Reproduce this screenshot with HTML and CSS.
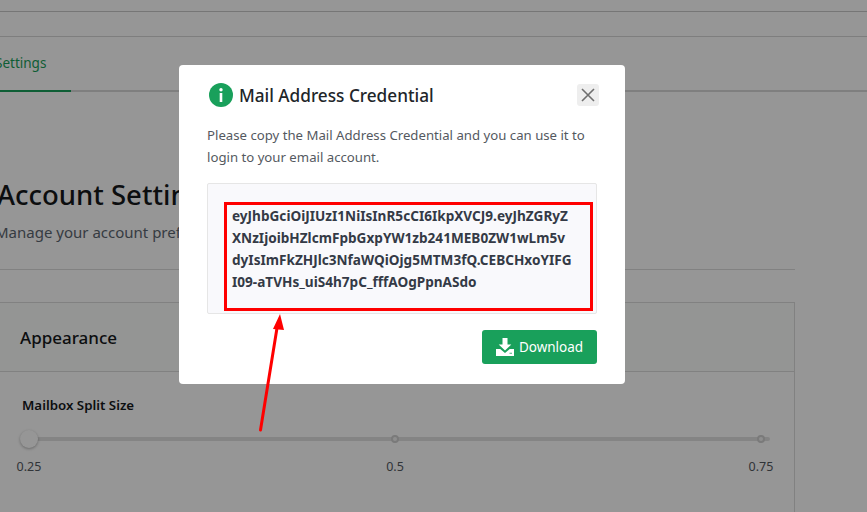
FILE: index.html
```html
<!DOCTYPE html>
<html lang="en">
<head>
<meta charset="utf-8">
<title>Mail Address Credential</title>
<link rel="stylesheet" href="styles.css">
</head>
<body>
<div class="page">
  <div class="topbar"></div>
  <div class="subbar"></div>
  <nav class="tabs"><span class="tab">Settings</span></nav>
  <main class="content">
    <h1 class="page-title">Account Settings</h1>
    <p class="page-sub">Manage your account preferences</p>
    <hr class="rule">
    <section class="card">
      <header class="card-head"><h2>Appearance</h2></header>
      <div class="card-body">
        <h3>Mailbox Split Size</h3>
        <div class="slider">
          <div class="track"></div>
          <span class="thumb"></span>
          <span class="dot dot-mid"></span>
          <span class="dot dot-end"></span>
        </div>
        <div class="ticks"><span>0.25</span><span>0.5</span><span>0.75</span></div>
      </div>
    </section>
  </main>
</div>

<div class="backdrop"></div>

<div class="modal">
  <div class="modal-head">
    <svg class="info" viewBox="0 0 24 24" aria-hidden="true">
      <circle cx="12" cy="12" r="12" fill="#19a05b"/>
      <rect x="10.700" y="10" width="2.600" height="9" fill="#fff"/>
      <circle cx="12" cy="6.800" r="1.700" fill="#fff"/>
    </svg>
    <h2 class="modal-title">Mail Address Credential</h2>
    <button class="close" aria-label="Close">
      <svg viewBox="0 0 22 22" aria-hidden="true"><path d="M5 5l12 12M17 5L5 17" stroke="#6f6f6f" stroke-width="1.600" fill="none"/></svg>
    </button>
  </div>
  <p class="modal-text">Please copy the Mail Address Credential and you can use it to login to your email account.</p>
  <div class="token-box">
    <div class="token">eyJhbGciOiJIUzI1NiIsInR5cCI6IkpXVCJ9.eyJhZGRyZ<br>XNzIjoibHZlcmFpbGxpYW1zb241MEB0ZW1wLm5v<br>dyIsImFkZHJlc3NfaWQiOjg5MTM3fQ.CEBCHxoYIFG<br>I09-aTVHs_uiS4h7pC_fffAOgPpnASdo</div>
  </div>
  <div class="modal-foot">
    <button class="download">
      <svg viewBox="0 0 18 18" aria-hidden="true">
        <path d="M6.500 0h5v6.500h3.800L9 12.600 2.700 6.500h3.800z" fill="#fff"/>
        <path d="M0 11h4.200L9 15l4.800-4H18v7H0z" fill="#fff"/>
        <rect x="13.500" y="14.800" width="2.500" height="0.800" fill="#19a05b"/>
      </svg>
      Download
    </button>
  </div>
</div>

<svg class="arrow" viewBox="0 0 40 130" aria-hidden="true">
  <path d="M4.500 124 L21 22" stroke="#f00" stroke-width="3" fill="none" stroke-linecap="round"/>
  <path d="M24 8 L28 24 L17 23z" fill="#f00"/>
</svg>
</body>
</html>
```
FILE: styles.css
```css
* { box-sizing: border-box; }
html, body { margin: 0; padding: 0; }
body {
  width: 867px;
  height: 512px;
  overflow: hidden;
  position: relative;
  background: #fff;
  font-family: "Noto Sans", "Open Sans", sans-serif;
  color: #212529;
}
.page { width: 867px; height: 512px; overflow: hidden; }
.topbar { height: 12px; border-bottom: 1px solid #c9c9c9; }
.subbar { height: 25px; border-bottom: 1px solid #d6d6d6; }
.tabs {
  height: 55px;
  border-bottom: 2px solid #d9d9d9;
  display: flex;
}
.tab {
  width: 71px;
  height: 55px;
  padding: 16px 0 0;
  border-bottom: 2px solid #19a05b;
  color: #19a05b;
  font-size: 13.500px;
  line-height: 20px;
  text-indent: -5px;
  white-space: nowrap;
  overflow: hidden;
}
.content { padding: 0 72px 0 0; }
.page-title {
  margin: 85px 0 0 -3px;
  font-size: 27.500px;
  line-height: 36px;
  font-weight: 500;
  color: #16181b;
  white-space: nowrap;
}
.page-sub {
  margin: 8px 0 0 -5px;
  font-size: 15px;
  line-height: 22px;
  color: #5c6670;
  white-space: nowrap;
}
.rule { margin: 26px 0 0; border: 0; border-top: 1px solid #dcdcdc; }
.card {
  margin-top: 32px;
  border: 1px solid #dcdcdc;
  border-left: 0;
  height: 300px;
}
.card-head {
  height: 69px;
  background: #fbfdfb;
  border-bottom: 1px solid #dcdcdc;
  padding: 0 20px;
  display: flex;
  align-items: center;
}
.card-head h2 { margin: 0; font-size: 17px; font-weight: 500; color: #16181b; }
.card-body { padding: 23px 0 0 0; }
.card-body h3 {
  margin: 0 0 0 22px;
  font-size: 13.300px;
  line-height: 20px;
  font-weight: 600;
  color: #16181b;
}
.slider { position: relative; height: 20px; margin-top: 14px; }
.track {
  position: absolute;
  left: 20px;
  top: 8px;
  width: 750px;
  height: 4px;
  border-radius: 2px;
  background: #e1e1e1;
}
.thumb {
  position: absolute;
  left: 20px;
  top: 1px;
  width: 18px;
  height: 18px;
  border-radius: 50%;
  background: #fff;
  box-shadow: 0 1px 3px rgba(0,0,0,.3);
}
.dot {
  position: absolute;
  top: 6px;
  width: 8px;
  height: 8px;
  border-radius: 50%;
  background: #f2f2f2;
  border: 2px solid #cfcfcf;
}
.dot-mid { left: 391px; }
.dot-end { left: 757px; }
.ticks {
  display: grid;
  grid-template-columns: repeat(3, 60px);
  column-gap: 306px;
  margin: 9px 0 0 -1px;
  font-size: 12.500px;
  line-height: 18px;
  color: #54595f;
  text-align: center;
}
.backdrop {
  position: absolute;
  inset: 0;
  background: rgba(0,0,0,.41);
}
.modal {
  position: absolute;
  left: 179px;
  top: 65px;
  width: 446px;
  height: 319px;
  background: #fff;
  border-radius: 4px;
  padding: 18px 28px 0;
}
.modal-head { display: flex; align-items: center; height: 24px; }
.info { width: 24px; height: 24px; margin-left: 2px; flex: none; }
.modal-title {
  margin: 1px 0 0 6px;
  font-size: 17.200px;
  line-height: 24px;
  font-weight: 500;
  color: #212529;
  white-space: nowrap;
}
.close {
  margin-left: auto;
  margin-right: -2px;
  margin-top: 0;
  width: 22px;
  height: 22px;
  padding: 0;
  border: 0;
  border-radius: 3px;
  background: #eeeeee;
  display: flex;
}
.close svg { width: 22px; height: 22px; }
.modal-text {
  margin: 17px 0 0;
  width: 390px;
  font-size: 13.200px;
  line-height: 22px;
  color: #54595f;
}
.token-box {
  margin-top: 15px;
  width: 390px;
  height: 131px;
  background: #f9f9fc;
  border: 1px solid #e6e6e6;
  border-radius: 2px;
  padding: 18px 3px 2px 16px;
}
.token {
  height: 109px;
  border: 3px solid #f00;
  padding: 0 0 0 5px;
  font-size: 13.600px;
  line-height: 22px;
  font-weight: 700;
  color: #343a46;
  white-space: nowrap;
}
.modal-foot { display: flex; justify-content: flex-end; margin-top: 16px; }
.download {
  width: 115px;
  height: 34px;
  border: 0;
  border-radius: 3px;
  background: #19a05b;
  color: #fff;
  font: 400 13.500px/20px "Noto Sans", "Open Sans", sans-serif;
  display: flex;
  align-items: center;
  justify-content: center;
  gap: 5px;
  padding: 0;
}
.download svg { width: 18px; height: 18px; }
.arrow {
  position: absolute;
  left: 256px;
  top: 306px;
  width: 40px;
  height: 130px;
}
```
